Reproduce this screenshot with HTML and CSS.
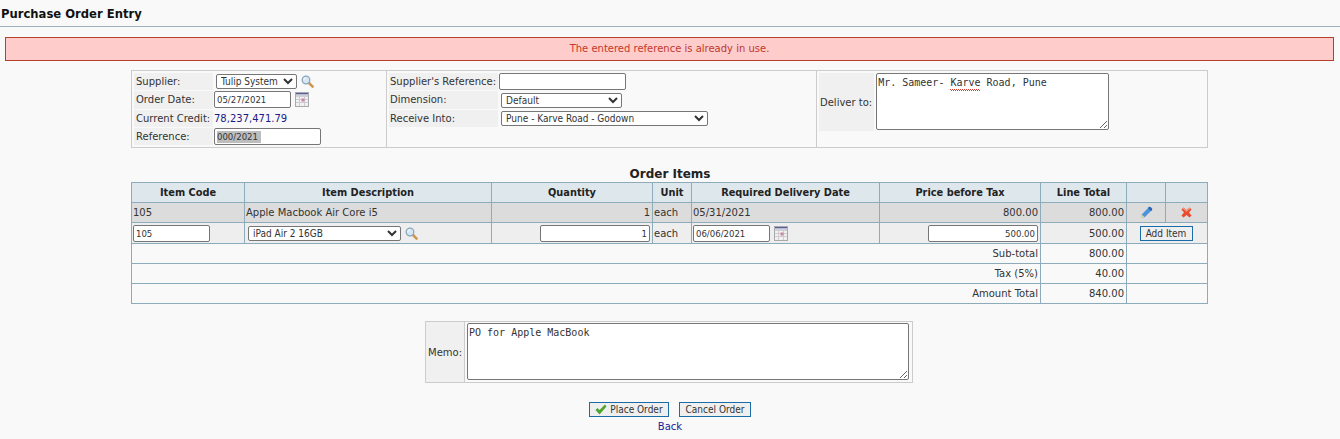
FILE: index.html
```html
<!DOCTYPE html>
<html lang="en">
<head>
    <meta charset="UTF-8">
    <title>Purchase Order Entry</title>
    <link rel="stylesheet" href="styles.css">
</head>
<body>
    <svg class="iconDefs" width="0" height="0">
        <symbol id="searchIcon" viewBox="0 0 13 13">
            <path d="M8 8l3.6 3.6" stroke="#d0964c" stroke-width="2.6" stroke-linecap="round"/>
            <circle cx="5" cy="5" r="3.8" fill="#d6e6f2" stroke="#8aa6bc" stroke-width="1.3"/>
            <path d="M2.9 4.9a2.1 2.1 0 0 1 2-2" fill="none" stroke="#fff" stroke-width="1"/>
        </symbol>
        <symbol id="calendarIcon" viewBox="0 0 14 15">
            <rect x="0.5" y="0.5" width="13" height="14" fill="#f1eff0" stroke="#a9a9b0"/>
            <rect x="1" y="1" width="12" height="1.5" fill="#5a5f98"/>
            <rect x="1" y="2.5" width="12" height="2.5" fill="#cfcfd8"/>
            <path d="M1 7.5h12M1 10.5h12M4.5 5v9M9.5 5v9" stroke="#d0ccd0" stroke-width="1"/>
            <rect x="6.5" y="6.5" width="3" height="3" fill="#c48aa0"/>
        </symbol>
    </svg>

    <h1 class="pageTitle">Purchase Order Entry</h1>
    <div class="errorMsg">The entered reference is already in use.</div>

    <table class="headerTable">
        <colgroup>
            <col class="headCol1">
            <col class="headCol2">
            <col class="headCol3">
        </colgroup>
        <tr>
            <td>
                <table class="fieldTable supplierFields">
                    <tr>
                        <td class="label">Supplier:</td>
                        <td class="indent">
                            <select class="supplierSelect"><option>Tulip System</option></select>
                            <svg class="icon search"><use href="#searchIcon"/></svg>
                        </td>
                    </tr>
                    <tr>
                        <td class="label">Order Date:</td>
                        <td>
                            <input class="dateInput" type="text" value="05/27/2021">
                            <svg class="icon calendar"><use href="#calendarIcon"/></svg>
                        </td>
                    </tr>
                    <tr>
                        <td class="label">Current Credit:</td>
                        <td class="credit">78,237,471.79</td>
                    </tr>
                    <tr>
                        <td class="label">Reference:</td>
                        <td><input class="refInput" type="text" value="000/2021"></td>
                    </tr>
                </table>
            </td>
            <td>
                <table class="fieldTable middleFields">
                    <tr>
                        <td class="label">Supplier's Reference:</td>
                        <td><input class="suppRefInput" type="text"></td>
                    </tr>
                    <tr>
                        <td class="label">Dimension:</td>
                        <td class="indent"><select class="dimSelect"><option>Default</option></select></td>
                    </tr>
                    <tr>
                        <td class="label">Receive Into:</td>
                        <td class="indent"><select class="locSelect"><option>Pune - Karve Road - Godown</option></select></td>
                    </tr>
                </table>
            </td>
            <td>
                <table class="fieldTable deliverFields">
                    <tr>
                        <td class="label">Deliver to:</td>
                        <td class="deliverCell"><textarea class="deliverText" spellcheck="false">Mr. Sameer- Karve Road, Pune</textarea></td>
                    </tr>
                </table>
            </td>
        </tr>
    </table>

    <h2 class="sectionTitle">Order Items</h2>

    <table class="itemsTable">
        <colgroup>
            <col class="codeCol">
            <col class="descCol">
            <col class="qtyCol">
            <col class="unitCol">
            <col class="dateCol">
            <col class="priceCol">
            <col class="totalCol">
            <col class="editCol">
            <col class="delCol">
        </colgroup>
        <tr>
            <th>Item Code</th>
            <th>Item Description</th>
            <th>Quantity</th>
            <th>Unit</th>
            <th>Required Delivery Date</th>
            <th>Price before Tax</th>
            <th>Line Total</th>
            <th></th>
            <th></th>
        </tr>
        <tr class="savedRow">
            <td>105</td>
            <td>Apple Macbook Air Core i5</td>
            <td class="num">1</td>
            <td>each</td>
            <td>05/31/2021</td>
            <td class="num">800.00</td>
            <td class="num">800.00</td>
            <td class="center">
                <svg class="rowIcon" viewBox="0 0 13 13">
                    <path d="M1 12l.8-3.6L8.8 1.2a1.3 1.3 0 0 1 1.8 0l1.2 1.2a1.3 1.3 0 0 1 0 1.8L4.6 11.2z" fill="#4a94dc"/>
                    <path d="M8.8 1.2a1.3 1.3 0 0 1 1.8 0l1.2 1.2a1.3 1.3 0 0 1 0 1.8l-.8.8L8 2z" fill="#2c62ac"/>
                    <path d="M1 12l.8-3.6 2.8 2.8z" fill="#efd9a6"/>
                </svg>
            </td>
            <td class="center">
                <svg class="rowIcon" viewBox="0 0 13 13">
                    <path d="M1.5 3.5l2-2 3 2.6 3-2.6 2 2L9 6.5l2.5 3-2 2-3-2.6-3 2.6-2-2L4 6.5z" fill="#ea4a2e"/>
                    <path d="M1.5 3.5l2-2 3 2.6 3-2.6 1 1-4 3.2-4-3.2z" fill="#f49a82"/>
                </svg>
            </td>
        </tr>
        <tr class="editRow">
            <td><input class="codeInput" type="text" value="105"></td>
            <td class="indent">
                <select class="itemSelect"><option>iPad Air 2 16GB</option></select>
                <svg class="icon search"><use href="#searchIcon"/></svg>
            </td>
            <td class="num"><input class="qtyInput" type="text" value="1"></td>
            <td>each</td>
            <td class="indent">
                <input class="dateInput" type="text" value="06/06/2021">
                <svg class="icon calendar"><use href="#calendarIcon"/></svg>
            </td>
            <td class="num"><input class="priceInput" type="text" value="500.00"></td>
            <td class="num">500.00</td>
            <td colspan="2" class="center"><button class="btn addBtn" type="button">Add Item</button></td>
        </tr>
        <tr>
            <td colspan="6" class="num">Sub-total</td>
            <td class="num">800.00</td>
            <td colspan="2"></td>
        </tr>
        <tr>
            <td colspan="6" class="num">Tax (5%)</td>
            <td class="num">40.00</td>
            <td colspan="2"></td>
        </tr>
        <tr>
            <td colspan="6" class="num">Amount Total</td>
            <td class="num">840.00</td>
            <td colspan="2"></td>
        </tr>
    </table>

    <table class="memoTable">
        <tr>
            <td class="memoLabel">Memo:</td>
            <td class="memoCell"><textarea class="memoText" spellcheck="false">PO for Apple MacBook</textarea></td>
        </tr>
    </table>

    <div class="actions">
        <button class="btn placeBtn" type="button">
            <svg class="checkIcon" viewBox="0 0 12 11">
                <path d="M0.5 6l2-2 2 2L10 0.5l1.5 2L4.5 10.5z" fill="#4ea52e"/>
            </svg>
            Place Order
        </button>
        <button class="btn cancelBtn" type="button">Cancel Order</button>
    </div>
    <a class="backLink" href="#">Back</a>
</body>
</html>
```

FILE: styles.css
```css
* {
    box-sizing: border-box;
}

body {
    margin: 0;
    background-color: #f9f9f9;
    color: #333;
    font-family: "DejaVu Sans", Verdana, sans-serif;
    font-size: 10px;
}

.iconDefs {
    display: block;
}

.pageTitle {
    margin: 0;
    height: 27px;
    padding: 7px 0 0 1px;
    border-bottom: 1px solid #a0b0ba;
    color: #111;
    font-size: 11.6px;
    line-height: 14px;
}

.errorMsg {
    margin: 10px 6px 0 5px;
    height: 24px;
    border: 1px solid #b5402a;
    background-color: #ffcccc;
    color: #c0392b;
    text-align: center;
    line-height: 22px;
}

table {
    border-collapse: collapse;
}

td {
    padding: 0;
}

input, select, textarea, .btn {
    font-family: "DejaVu Sans Condensed", "DejaVu Sans", sans-serif;
    font-stretch: condensed;
}

input, select, textarea {
    margin: 0;
    border: 1px solid #767676;
    border-radius: 2px;
    background-color: #fff;
    color: #333;
    vertical-align: middle;
}

input {
    height: 17px;
    padding: 0 2px;
    font-size: 9.5px;
}

select {
    height: 15px;
    padding: 0;
    font-size: 10px;
}

textarea {
    display: block;
    padding: 3px 1px 1px 1px;
    font-family: "DejaVu Sans Mono", monospace;
    font-stretch: normal;
    font-size: 10px;
}

.headerTable {
    width: 1077px;
    height: 78px;
    margin: 9px 0 0 131px;
    table-layout: fixed;
    border: 1px solid #ccc;
}

.headerTable > tbody > tr > td {
    border-left: 1px solid #ccc;
    padding: 1px 0 0 1px;
    vertical-align: top;
}

.headCol1 {
    width: 255px;
}

.headCol2 {
    width: 430px;
}

.fieldTable {
    border-collapse: separate;
    border-spacing: 1px;
}

.fieldTable td {
    height: 17.3px;
    line-height: 15px;
    white-space: nowrap;
}

.label {
    padding: 0 2px;
    background-color: #f0f0f0;
}

.supplierFields .label {
    width: 79px;
}

.middleFields .label {
    width: 108px;
    padding-left: 1px;
}

.indent {
    padding-left: 2px;
}

.credit {
    color: #1a1a8c;
}

.supplierSelect {
    width: 81px;
}

.dateInput {
    width: 77px;
}

.refInput {
    width: 107px;
    background: #fff linear-gradient(#bdbdbd, #bdbdbd) no-repeat 2px center / 44px 12px;
}

.suppRefInput {
    width: 127px;
}

.dimSelect {
    width: 121px;
}

.locSelect {
    width: 207px;
}

.deliverFields .label {
    width: 55px;
    height: 58px;
    padding-left: 1px;
}

.deliverFields .deliverCell {
    padding-left: 1px;
    vertical-align: top;
}

/* spellcheck squiggle under Karve */
.deliverText {
    width: 233px;
    height: 57px;
    background:
        repeating-linear-gradient(90deg, #e03a2a 0 1px, transparent 1px 2px) no-repeat 73px 15px / 30px 1px,
        repeating-linear-gradient(90deg, transparent 0 1px, #e03a2a 1px 2px) no-repeat 73px 16px / 30px 1px,
        #fff;
}

.icon {
    vertical-align: middle;
}

.search {
    width: 13px;
    height: 13px;
    margin-left: 1px;
}

.calendar {
    width: 14px;
    height: 15px;
    margin-left: 1px;
}

.sectionTitle {
    margin: 18px 0 0 0;
    height: 16px;
    text-align: center;
    color: #222;
    font-size: 12px;
    line-height: 16px;
}

.itemsTable {
    width: 1077px;
    margin-left: 131px;
    table-layout: fixed;
    border: 1px solid #8cacbb;
}

.itemsTable th,
.itemsTable td {
    border: 1px solid #8cacbb;
    padding: 0 1px;
    height: 20px;
}

.itemsTable .num {
    padding-right: 2px;
    text-align: right;
}

.itemsTable th {
    background-color: #dee7ec;
    color: #222;
    font-size: 9.8px;
}

.codeCol {
    width: 113px;
}

.descCol {
    width: 247px;
}

.qtyCol {
    width: 161px;
}

.unitCol {
    width: 39px;
}

.dateCol {
    width: 188px;
}

.priceCol {
    width: 161px;
}

.totalCol {
    width: 86px;
}

.editCol {
    width: 39px;
}

.delCol {
    width: 42px;
}

.savedRow td {
    background-color: #dcdcdc;
}

.editRow td {
    background-color: #eee;
    height: 21px;
}

.center {
    text-align: center;
}

.rowIcon {
    display: block;
    width: 13px;
    height: 13px;
    margin: 0 auto;
}

.codeInput {
    width: 77px;
}

.itemSelect {
    width: 153px;
    margin-left: 2px;
}

.qtyInput {
    width: 110px;
    text-align: right;
}

.priceInput {
    width: 110px;
    text-align: right;
}

.btn {
    height: 15px;
    padding: 0;
    border: 1px solid #1a6ca8;
    background-color: #efefef;
    color: #333;
    font-size: 10px;
    line-height: 13px;
}

.addBtn {
    width: 53px;
    margin-right: 2px;
}

.placeBtn {
    width: 80px;
}

.cancelBtn {
    width: 72px;
}

.memoTable {
    width: 488px;
    height: 62px;
    margin: 17px 0 0 425px;
    border: 1px solid #ccc;
}

.memoLabel {
    width: 39px;
    padding: 0 2px;
    border-right: 1px solid #ccc;
    background-color: #f0f0f0;
    text-align: center;
}

.memoCell {
    padding: 1px 3px 2px 2px;
}

.memoText {
    width: 442px;
    height: 57px;
}

.actions {
    display: flex;
    justify-content: center;
    gap: 10px;
    margin-top: 19px;
}

.checkIcon {
    width: 12px;
    height: 11px;
    vertical-align: -2px;
}

.backLink {
    display: block;
    margin-top: 4px;
    text-align: center;
    color: #1a1a9c;
    text-decoration: none;
    line-height: 12px;
}
```
